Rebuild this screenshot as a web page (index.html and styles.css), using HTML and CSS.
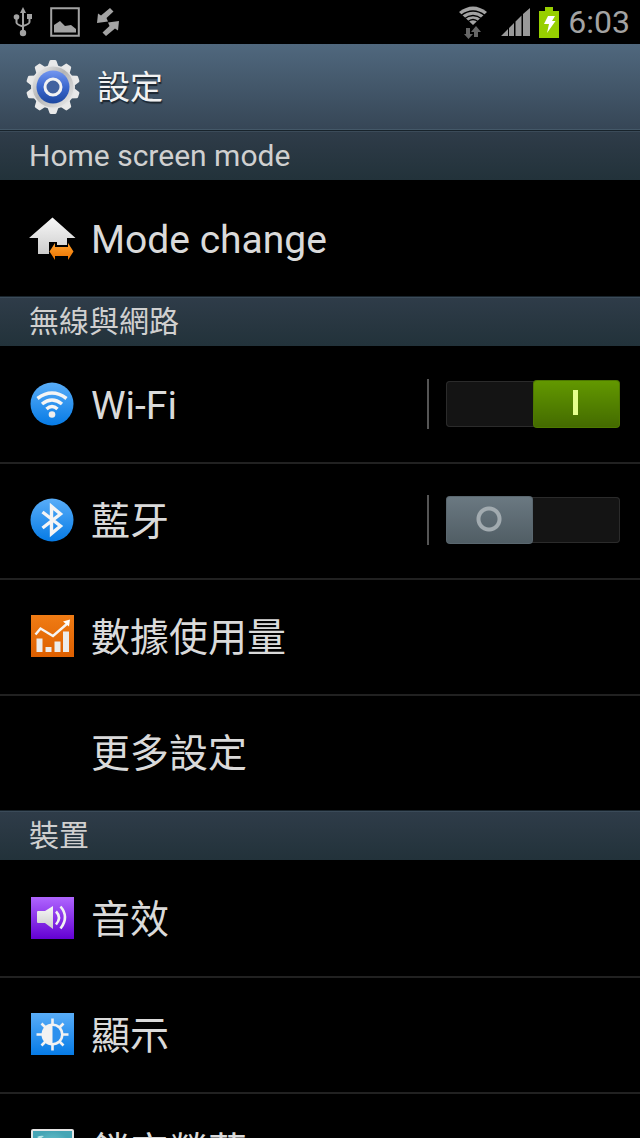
FILE: index.html
```html
<!DOCTYPE html>
<html lang="zh-Hant">
<head>
<meta charset="utf-8">
<meta name="viewport" content="width=device-width, initial-scale=1">
<title>設定</title>
<link rel="stylesheet" href="styles.css">
</head>
<body>
<svg class="defs" aria-hidden="true">
  <defs>
    <linearGradient id="blue" x1="0" y1="0" x2="0" y2="1"><stop offset="0" stop-color="#59adf8"/><stop offset="1" stop-color="#067be6"/></linearGradient>
    <linearGradient id="orange" x1="0" y1="0" x2="0" y2="1"><stop offset="0" stop-color="#f07c14"/><stop offset="1" stop-color="#dd5f00"/></linearGradient>
    <linearGradient id="purple" x1="0" y1="0" x2="0" y2="1"><stop offset="0" stop-color="#b066ff"/><stop offset="1" stop-color="#6300d2"/></linearGradient>
    <linearGradient id="silver" x1="0" y1="0" x2="0" y2="1"><stop offset="0" stop-color="#f8f8f8"/><stop offset="1" stop-color="#cccccc"/></linearGradient>
    <linearGradient id="metal" x1="0" y1="0" x2="1" y2="1"><stop offset="0" stop-color="#f4f4f4"/><stop offset=".45" stop-color="#b4b4b4"/><stop offset="1" stop-color="#eeeeee"/></linearGradient>
    <linearGradient id="royal" x1="0" y1="0" x2="0" y2="1"><stop offset="0" stop-color="#7396f0"/><stop offset=".5" stop-color="#3b68cf"/><stop offset="1" stop-color="#1c479f"/></linearGradient>
    <linearGradient id="amber" x1="0" y1="0" x2="0" y2="1"><stop offset="0" stop-color="#ffa02c"/><stop offset="1" stop-color="#ed7300"/></linearGradient>
    <radialGradient id="teal"><stop offset="0" stop-color="#7fcfd6"/><stop offset="1" stop-color="#46a5b5"/></radialGradient>
    <path id="teeth" d="M22 9l2.500-7q.3-1 1.500-1h4q1.200 0 1.500 1L34 9v38l-2.500 7q-.3 1-1.500 1h-4q-1.200 0-1.500-1L22 47z"/>
  </defs>
</svg>
<div class="screen">
  <div class="status">
    <div class="status-group notices">
      <svg width="20" height="30" viewBox="0 0 20 30" fill="none" stroke="#a3a3a3" stroke-width="2"><path d="M10 4v20M3.500 11v4.500q0 2 6.500 4M16.500 9v6q0 2-6.500 4"/><g fill="#a3a3a3" stroke="none"><path d="M10 0l3 6H7z"/><circle cx="3.500" cy="10" r="2.800"/><path d="M14 7h5v5h-5z"/><circle cx="10" cy="26" r="3.200"/></g></svg>
      <svg width="30" height="30" viewBox="0 0 30 30"><path d="M1.200 1.200h27.600v27.600H1.200z" fill="none" stroke="#a3a3a3" stroke-width="2"/><path d="M4 25.500V18l6-4 5 5 6-1 5 4v3.500z" fill="#a3a3a3"/></svg>
      <svg width="22" height="28" viewBox="0 0 22 28" fill="#a3a3a3"><path d="M13 0l3.500 3.500-7 6.500 1.500 3.500-11 1.500 1-9.500 3 2zM22 13l-1 9.500-3-2L9 28l-3.500-3.500 7-6.500-1.500-3.500z"/></svg>
    </div>
    <div class="status-group">
      <svg class="wifi-status" width="30" height="33" viewBox="0 0 30 33"><path d="M1 6Q15-5 29 6L15 19z" fill="#a3a3a3"/><g fill="none" stroke="#000" stroke-width="1.300"><path d="M3 9.500q12-9 24 0M6 13q9-7 18 0M9.500 16q5.500-5 11 0"/></g><g fill="#666"><path d="M8 22h4v6h3l-4.500 5L6 28h2zM16 31v-5h-3l5-6 5 6h-3v5z"/></g></svg>
      <svg width="30" height="30" viewBox="0 0 30 30" fill="#999"><path d="M1 29l7-7v7zM9 29v-8l5-5v13zM15.500 29V14.500l6-6V29zM23 29V7l7-6v28z"/></svg>
      <svg width="20" height="31" viewBox="0 0 20 31"><path d="M0 4h6V0h8v4h6v27H0z" fill="#97cf00"/><path d="M9 9h7l-3 5h3.500L8 26l2-9H5z" fill="#fff"/></svg>
      <time class="clock">6:03</time>
    </div>
  </div>

  <header class="header">
    <svg class="gear" width="56" height="56" viewBox="0 0 56 56">
      <g fill="#e9e9e9">
        <use href="#teeth"/>
        <use href="#teeth" transform="rotate(36 28 28)"/>
        <use href="#teeth" transform="rotate(72 28 28)"/>
        <use href="#teeth" transform="rotate(108 28 28)"/>
        <use href="#teeth" transform="rotate(144 28 28)"/>
      </g>
      <circle cx="28" cy="28" r="22" fill="#e6e6e6"/>
      <circle cx="28" cy="28" r="20.500" fill="url(#metal)"/>
      <circle cx="28" cy="28" r="16.500" fill="url(#royal)"/>
      <circle cx="28" cy="28" r="8" fill="#42629f" stroke="#f2f2f2" stroke-width="3"/>
    </svg>
    <h1 class="title">設定</h1>
  </header>

  <main class="content">
    <h2 class="section">Home screen mode</h2>
    <ul class="list">
      <li class="row"><a class="item" href="#mode">
        <svg class="icon" width="48" height="48" viewBox="0 0 48 48"><path d="M24.500 3.500l23 20.500H39v7H29v-3h-8v12H10V24H1z" fill="url(#silver)"/><path d="M21.500 37.500L27 29v4h13v-4l5.500 8.500L40 46v-4H27v4z" fill="url(#amber)"/></svg>
        <span class="label">Mode change</span></a></li>
    </ul>

    <h2 class="section">無線與網路</h2>
    <ul class="list">
      <li class="row"><a class="item" href="#wifi">
        <svg class="icon" width="48" height="48" viewBox="0 0 48 48"><circle cx="24" cy="24" r="21.500" fill="url(#blue)"/><g fill="none" stroke="#f5f5f5" stroke-width="3.500"><path d="M9.500 18.500q14.500-11 29 0M14 24q10-8 20 0M18.500 29q5.500-5 11 0"/></g><circle cx="24" cy="34.500" r="3.300" fill="#eee"/></svg>
        <span class="label">Wi-Fi</span></a>
        <div class="control"><input class="switch" type="checkbox" role="switch" aria-label="Wi-Fi" checked></div></li>
      <li class="row"><a class="item" href="#bluetooth">
        <svg class="icon" width="48" height="48" viewBox="0 0 48 48"><circle cx="24" cy="24" r="21.500" fill="url(#blue)"/><path d="M14.500 16l18 14-9 7.500v-27l9 7.500-18 14" fill="none" stroke="#f5f5f5" stroke-width="3.400"/></svg>
        <span class="label">藍牙</span></a>
        <div class="control"><input class="switch" type="checkbox" role="switch" aria-label="藍牙"></div></li>
      <li class="row"><a class="item" href="#data">
        <svg class="icon" width="48" height="48" viewBox="0 0 48 48"><path d="M3 3h43v42H3z" fill="url(#orange)"/><path d="M8.500 26.500h6V40h-6zM17.500 35h6v5h-6zM26.500 29.500h6V40h-6zM35 19.500h6V40h-6z" fill="#ececec"/><path d="M7.500 22.500l5-6L25 24l15-13" fill="none" stroke="#f5f5f5" stroke-width="2.400"/><path d="M35 9.500l7-2-1 7z" fill="#fff"/></svg>
        <span class="label">數據使用量</span></a></li>
      <li class="row"><a class="item" href="#more"><span class="icon icon-blank"></span><span class="label">更多設定</span></a></li>
    </ul>

    <h2 class="section">裝置</h2>
    <ul class="list">
      <li class="row"><a class="item" href="#sound">
        <svg class="icon" width="48" height="48" viewBox="0 0 48 48"><path d="M3 3h43v42H3z" fill="url(#purple)"/><path d="M9 18q0-1 1-1h7l8-5v23l-8-6h-7q-1 0-1-1z" fill="url(#silver)"/><g fill="none" stroke="#f2f2f2" stroke-width="2.600"><path d="M28 17.500q6 6 0 13M32.500 12.500q9 10.500 0 22"/></g></svg>
        <span class="label">音效</span></a></li>
      <li class="row"><a class="item" href="#display">
        <svg class="icon" width="48" height="48" viewBox="0 0 48 48"><path d="M3 3h43v42H3z" fill="url(#blue)"/><g stroke="#f2f2f2" stroke-width="2.600"><path d="M24.500 8.500v32M8.500 24.500h32M13.500 13.500l22 22M35.500 13.500l-22 22"/></g><circle cx="24.500" cy="24.500" r="11" fill="#f2f2f2"/><path d="M24.500 16a8.500 8.500 0 0 1 0 17z" fill="#2b90ee"/></svg>
        <span class="label">顯示</span></a></li>
      <li class="row"><a class="item" href="#lock">
        <svg class="icon" width="48" height="48" viewBox="0 0 48 48"><rect x="3" y="3" width="43" height="42" rx="2" fill="#e5e5e5"/><path d="M5 5h39v38H5z" fill="url(#teal)"/><path d="M9 11q4-2 7-1l-4 3z" fill="#b9e6e8"/></svg>
        <span class="label">鎖定螢幕</span></a></li>
    </ul>
  </main>
</div>
</body>
</html>
```
FILE: styles.css
```css
* {
  box-sizing: border-box;
}

body {
  margin: 0;
  background: #000;
  color: #dadada;
  font-family: Roboto, "Noto Sans CJK TC", sans-serif;
}

.defs {
  position: absolute;
  width: 0;
  height: 0;
}

.screen {
  display: flex;
  flex-direction: column;
  height: 100vh;
}

.status {
  display: flex;
  flex: none;
  justify-content: space-between;
  align-items: center;
  height: 44px;
  padding: 0 10px 0 13px;
}

.status-group {
  display: flex;
  align-items: center;
  gap: 9px;
}

.notices {
  gap: 17px;
}

.wifi-status {
  margin-right: 3px;
}

.clock {
  color: #a3a3a3;
  font-size: 32px;
  line-height: 44px;
}

.header {
  display: flex;
  flex: none;
  align-items: center;
  gap: 16px;
  height: 86px;
  padding: 0 25px;
  background: linear-gradient(#50687e, #364656);
  border-bottom: 1px solid #445868;
}

.title {
  margin: 0;
  padding-top: 2px;
  color: #f2f2f2;
  font-size: 33px;
  font-weight: 400;
  line-height: 48px;
  text-shadow: 1px 2px 1px #1c2630;
}

.content {
  flex: 1;
  min-height: 0;
  overflow-y: auto;
  scrollbar-width: none;
}

.section {
  height: 50px;
  margin: 0;
  padding: 0 29px;
  border-top: 1px solid #18232b;
  background: linear-gradient(#2f3c49, #22323a);
  box-shadow: inset 0 1px #3b4b59;
  color: #d0d0d0;
  font-size: 30px;
  font-weight: 400;
  line-height: 50px;
}

.list {
  margin: 0;
  padding: 0;
  list-style: none;
}

.row {
  display: flex;
  align-items: center;
  height: 116px;
  padding: 0 20px 0 28px;
}

.row + .row {
  box-shadow: inset 0 2px #212121;
}

.item {
  display: flex;
  flex: 1;
  align-items: center;
  gap: 15px;
  color: inherit;
  text-decoration: none;
}

.icon {
  flex: none;
}

.icon-blank {
  width: 48px;
  height: 48px;
}

.label {
  padding-top: 4px;
  font-size: 39px;
  line-height: 58px;
}

.control {
  display: flex;
  align-items: center;
  height: 50px;
  padding-left: 17px;
  border-left: 2px solid #555;
}

.switch {
  display: flex;
  align-items: center;
  width: 174px;
  height: 46px;
  margin: 0;
  appearance: none;
  border-radius: 4px;
  background: #141414;
  box-shadow: inset 0 0 0 1px #2b2b2b;
}

.switch::before {
  content: "";
  width: 87px;
  height: 48px;
  flex: none;
  border-radius: 4px;
  background:
    radial-gradient(circle at 43px 23px, transparent 8px, #a2abb0 9px, #a2abb0 12px, transparent 13px),
    linear-gradient(#6b7982, #505d64);
  box-shadow: inset 0 0 0 1px #5a676f;
}

.switch:checked {
  justify-content: flex-end;
}

.switch:checked::before {
  background:
    linear-gradient(#e6ff8c, #e6ff8c) 40px 10px / 5px 25px no-repeat,
    linear-gradient(#639900, #436a00);
  box-shadow: inset 0 0 0 1px #4d7800;
}
```
